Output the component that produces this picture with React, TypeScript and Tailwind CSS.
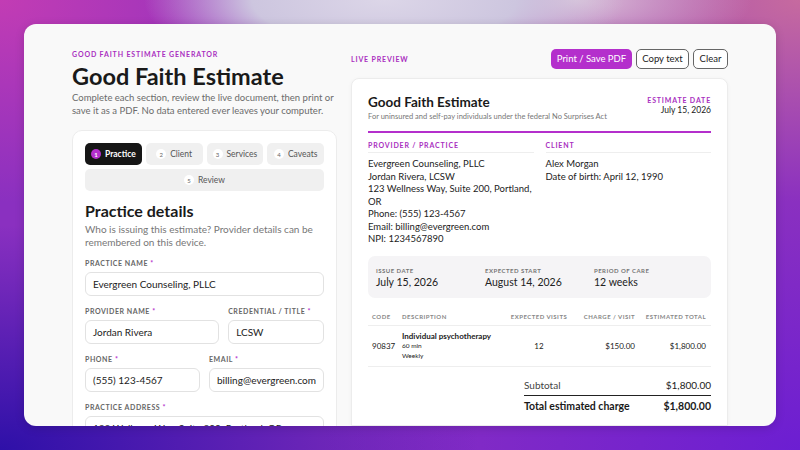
import type { ReactNode } from "react"

const tabs = [
  { n: 1, label: "Practice", active: true },
  { n: 2, label: "Client" },
  { n: 3, label: "Services" },
  { n: 4, label: "Caveats" },
]

const providerLines = [
  "Evergreen Counseling, PLLC",
  "Jordan Rivera, LCSW",
  "123 Wellness Way, Suite 200, Portland,",
  "OR",
  "Phone: (555) 123-4567",
  "Email: billing@evergreen.com",
  "NPI: 1234567890",
]

function StepTab({ n, label, active }: { n: number; label: string; active?: boolean }) {
  return (
    <div
      className={
        active
          ? "flex h-[22px] items-center justify-center gap-[4px] rounded-[5px] bg-[#161616] text-[8.5px] font-bold text-white"
          : "flex h-[22px] items-center justify-center gap-[4px] rounded-[5px] bg-[#f0f0f0] text-[8.5px] text-[#555]"
      }
    >
      <span
        className={
          active
            ? "flex h-[10px] w-[10px] items-center justify-center rounded-full bg-[#b42fcc] text-[6px] text-white"
            : "flex h-[10px] w-[10px] items-center justify-center rounded-full bg-white text-[6px] text-[#666]"
        }
      >
        {n}
      </span>
      {label}
    </div>
  )
}

function Field({ label, value }: { label: string; value: string }) {
  return (
    <div className="flex flex-col gap-[5px]">
      <div className="text-[7px] leading-[8px] font-bold tracking-[0.08em] text-[#666] uppercase">
        {label} <span className="text-[#b42fcc]">*</span>
      </div>
      <div className="flex h-[24px] items-center rounded-[6px] border border-[#e2e2e2] bg-white px-[7px] text-[10px] text-[#222]">
        {value}
      </div>
    </div>
  )
}

function Eyebrow({ children, className = "" }: { children: ReactNode; className?: string }) {
  return (
    <div className={"text-[7px] leading-[8px] font-bold tracking-[0.12em] text-[#a92fc0] uppercase " + className}>
      {children}
    </div>
  )
}

export default function App() {
  return (
    <div className="h-[450px] w-[800px] overflow-hidden bg-[#8a30c0] bg-[radial-gradient(ellipse_30%_18%_at_48%_0%,#dcd6e8_0%,#cdc6df_55%,transparent_100%),radial-gradient(ellipse_22%_14%_at_72%_0%,#dcc2d8_0%,transparent_100%),radial-gradient(ellipse_50%_45%_at_100%_0%,#c66a9f_0%,transparent_100%),radial-gradient(ellipse_40%_45%_at_0%_0%,#c23cb4_0%,transparent_100%),radial-gradient(ellipse_60%_50%_at_0%_100%,#2e10a8_0%,transparent_100%),radial-gradient(ellipse_60%_55%_at_100%_100%,#6c1ed2_0%,transparent_100%)] p-6 font-['Lato','Noto_Sans',sans-serif]">
      <div className="flex h-full gap-[14px] overflow-hidden rounded-[12px] bg-[#f9f9f9] px-12 pt-[25px] shadow-[0_2px_10px_rgba(0,0,0,0.15)]">
        {/* left: form */}
        <div className="flex w-[265px] shrink-0 flex-col">
          <Eyebrow className="pt-[1px]">Good Faith Estimate Generator</Eyebrow>
          <h1 className="mt-[5px] text-[23.5px] leading-[26px] font-bold text-[#1a1a1a]">Good Faith Estimate</h1>
          <p className="mt-[3px] text-[9.5px] leading-[12.5px] text-[#6b6b6b]">
            Complete each section, review the live document, then print or save it as a PDF. No data entered ever
            leaves your computer.
          </p>

          <div className="mt-[13px] rounded-[10px] border border-[#ececec] bg-white p-3">
            <div className="grid grid-cols-4 gap-1">
              {tabs.map((t) => (
                <StepTab key={t.n} {...t} />
              ))}
              <div className="col-span-4">
                <StepTab n={5} label="Review" />
              </div>
            </div>

            <h2 className="mt-[10px] text-[16px] leading-[20px] font-bold text-[#1a1a1a]">Practice details</h2>
            <p className="mt-[2px] text-[10px] leading-[12.5px] text-[#777]">
              Who is issuing this estimate? Provider details can be remembered on this device.
            </p>

            <div className="mt-[11px] flex flex-col gap-[11px]">
              <Field label="Practice name" value="Evergreen Counseling, PLLC" />
              <div className="grid grid-cols-[1.4fr_1fr] gap-[9px]">
                <Field label="Provider name" value="Jordan Rivera" />
                <Field label="Credential / title" value="LCSW" />
              </div>
              <div className="grid grid-cols-2 gap-[9px]">
                <Field label="Phone" value="(555) 123-4567" />
                <Field label="Email" value="billing@evergreen.com" />
              </div>
              <Field label="Practice address" value="123 Wellness Way, Suite 200, Portland, OR" />
            </div>
          </div>
        </div>

        {/* right: live preview */}
        <div className="flex min-w-0 flex-1 flex-col">
          <div className="flex h-[20px] items-center justify-between">
            <Eyebrow>Live preview</Eyebrow>
            <div className="flex gap-[4px]">
              <button className="h-[20px] w-[81px] rounded-[5px] bg-[#b42fcc] text-[9.5px] text-white">
                Print / Save PDF
              </button>
              <button className="h-[20px] w-[53px] rounded-[5px] border border-[#666] bg-white text-[9.5px] text-[#222]">
                Copy text
              </button>
              <button className="h-[20px] w-[35px] rounded-[5px] border border-[#666] bg-white text-[9.5px] text-[#222]">
                Clear
              </button>
            </div>
          </div>

          <div className="mt-[9px] flex-1 rounded-t-[8px] border border-[#ececec] bg-white px-[16px] pt-[15px] shadow-[0_1px_4px_rgba(0,0,0,0.04)]">
            <div className="flex justify-between">
              <div>
                <div className="text-[13.5px] leading-[16px] font-bold text-[#1a1a1a]">Good Faith Estimate</div>
                <div className="mt-[2px] text-[7.5px] leading-[10px] text-[#777]">
                  For uninsured and self-pay individuals under the federal No Surprises Act
                </div>
              </div>
              <div className="pt-[2px] text-right">
                <Eyebrow>Estimate date</Eyebrow>
                <div className="mt-[1px] text-[8.5px] leading-[11px] text-[#222]">July 15, 2026</div>
              </div>
            </div>

            <div className="mt-[9px] h-[2px] bg-[#b42fcc]" />

            <div className="mt-[8px] grid grid-cols-2 gap-3">
              <div>
                <Eyebrow className="border-b border-[#eeeeee] pb-[3px]">Provider / Practice</Eyebrow>
                <div className="mt-[5px] text-[9.5px] leading-[12.5px] text-[#222]">
                  {providerLines.map((l) => (
                    <div key={l}>{l}</div>
                  ))}
                </div>
              </div>
              <div>
                <Eyebrow className="border-b border-[#eeeeee] pb-[3px]">Client</Eyebrow>
                <div className="mt-[5px] text-[9.5px] leading-[12.5px] text-[#222]">
                  <div>Alex Morgan</div>
                  <div>Date of birth: April 12, 1990</div>
                </div>
              </div>
            </div>

            <div className="mt-[10px] grid h-[42px] grid-cols-3 rounded-[7px] bg-[#f5f4f6] px-2 pt-[11px]">
              {[
                ["Issue date", "July 15, 2026"],
                ["Expected start", "August 14, 2026"],
                ["Period of care", "12 weeks"],
              ].map(([k, v]) => (
                <div key={k}>
                  <div className="text-[6px] leading-[8px] font-bold tracking-[0.08em] text-[#777] uppercase">{k}</div>
                  <div className="mt-[1px] text-[10.5px] leading-[13px] text-[#222]">{v}</div>
                </div>
              ))}
            </div>

            <div className="mt-[11px] text-[6px] leading-[8px] font-bold tracking-[0.08em] text-[#888] uppercase">
              <div className="grid grid-cols-[30px_108px_66px_67px_71px] border-b border-[#eeeeee] py-[4px]">
                <div className="pl-1">Code</div>
                <div className="pl-1">Description</div>
                <div className="text-center">Expected visits</div>
                <div className="pr-1 text-right">Charge / visit</div>
                <div className="pr-1 text-right">Estimated total</div>
              </div>
            </div>
            <div className="grid grid-cols-[30px_108px_66px_67px_71px] items-center border-b border-[#eeeeee] py-[5px] text-[8px] text-[#222]">
              <div className="pl-1">90837</div>
              <div className="pl-1">
                <div className="text-[8px] leading-[10px] font-bold">Individual psychotherapy</div>
                <div className="text-[6.5px] leading-[10px]">60 min</div>
                <div className="text-[6.5px] leading-[10px]">Weekly</div>
              </div>
              <div className="text-center">12</div>
              <div className="pr-1 text-right">$150.00</div>
              <div className="pr-1 text-right">$1,800.00</div>
            </div>

            <div className="mt-[9px] ml-auto w-[187px]">
              <div className="flex h-[20px] items-center justify-between border-b-[1.5px] border-[#222] text-[10px] text-[#444]">
                <span>Subtotal</span>
                <span className="text-[#222]">$1,800.00</span>
              </div>
              <div className="flex h-[23px] items-center justify-between text-[10.5px] font-bold text-[#1a1a1a]">
                <span>Total estimated charge</span>
                <span>$1,800.00</span>
              </div>
            </div>
          </div>
        </div>
      </div>
    </div>
  )
}
